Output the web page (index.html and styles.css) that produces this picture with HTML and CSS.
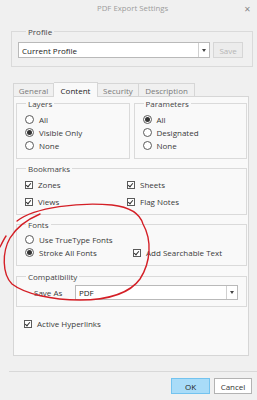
FILE: index.html
```html
<!DOCTYPE html>
<html lang="en">

<head>
    <meta charset="UTF-8">
    <meta name="viewport" content="width=device-width, initial-scale=1.0">
    <title>PDF Export Settings</title>
    <link rel="stylesheet" href="styles.css">
</head>

<body>
    <div class="titlebar">
        <span class="title">PDF Export Settings</span>
        <span class="close">&#x2715;</span>
    </div>

    <fieldset class="group profile">
        <legend>Profile</legend>
        <div class="profile-row">
            <div class="select profile-select">
                <span class="select-text">Current Profile</span>
                <span class="arrow"></span>
            </div>
            <div class="btn btn-disabled">Save</div>
        </div>
    </fieldset>

    <div class="tabs">
        <div class="tab tab-first">General</div>
        <div class="tab tab-active">Content</div>
        <div class="tab">Security</div>
        <div class="tab tab-desc">Description</div>
    </div>

    <div class="panel">
        <div class="cols">
            <fieldset class="group col">
                <legend>Layers</legend>
                <div class="rows">
                    <div class="opt"><span class="radio"></span>All</div>
                    <div class="opt"><span class="radio checked"></span>Visible Only</div>
                    <div class="opt"><span class="radio"></span>None</div>
                </div>
            </fieldset>
            <fieldset class="group col">
                <legend class="legend-params">Parameters</legend>
                <div class="rows rows-params">
                    <div class="opt"><span class="radio checked"></span>All</div>
                    <div class="opt"><span class="radio"></span>Designated</div>
                    <div class="opt"><span class="radio"></span>None</div>
                </div>
            </fieldset>
        </div>

        <fieldset class="group bookmarks">
            <legend>Bookmarks</legend>
            <div class="grid grid-bookmarks">
                <div class="opt"><span class="check"></span>Zones</div>
                <div class="opt"><span class="check"></span>Sheets</div>
                <div class="opt"><span class="check"></span>Views</div>
                <div class="opt"><span class="check"></span>Flag Notes</div>
            </div>
        </fieldset>

        <fieldset class="group fonts">
            <legend>Fonts</legend>
            <div class="grid grid-fonts">
                <div class="opt"><span class="radio"></span>Use TrueType Fonts</div>
                <div></div>
                <div class="opt"><span class="radio checked"></span>Stroke All Fonts</div>
                <div class="opt"><span class="check"></span>Add Searchable Text</div>
            </div>
        </fieldset>

        <fieldset class="group compat">
            <legend>Compatibility</legend>
            <div class="compat-row">
                <span class="compat-label">Save As</span>
                <div class="select compat-select">
                    <span class="select-text">PDF</span>
                    <span class="arrow"></span>
                </div>
            </div>
        </fieldset>

        <div class="opt hyperlinks"><span class="check"></span>Active Hyperlinks</div>
    </div>

    <div class="footer">
        <div class="btn btn-ok">OK</div>
        <div class="btn btn-cancel">Cancel</div>
    </div>

    <!-- red pen mark drawn over the dialog -->
    <svg class="annotation" width="257" height="400" viewBox="0 0 257 400">
        <path d="M17 221 C35 207, 80 202, 112 205 C130 207, 140 214, 143 224 C152 240, 151 262, 140 279 C130 293, 108 300, 80 300 C52 300, 25 294, 12 284 C2 274, 2 252, 10 238 C16 228, 26 220, 40 214"
            fill="none" stroke="#d41f26" stroke-width="1.4" stroke-linecap="round" />
        <path d="M0 247 C2 243, 4 239, 6 236" fill="none" stroke="#d41f26" stroke-width="1.4" stroke-linecap="round" />
    </svg>
</body>

</html>
```

FILE: styles.css
```css
body {
    margin: 0;
    width: 257px;
    height: 400px;
    overflow: hidden;
    position: relative;
    background: #f0f0f0;
    font-family: "Open Sans", "Noto Sans", sans-serif;
    font-size: 8px;
    color: #3a3a3a;
}

.titlebar {
    height: 16px;
    display: flex;
    align-items: center;
    padding: 0 6px 0 97px;
}

.title {
    flex: 1;
    font-size: 7.8px;
    color: #9c9c9c;
}

.close {
    font-size: 8px;
    color: #8a8a8a;
}

/* group boxes */
.group {
    margin: 0;
    padding: 0;
    min-width: 0;
    border: 1px solid #dadada;
}

.group legend {
    padding: 0 2px;
    margin-left: 9px;
    line-height: 11px;
    color: #444;
}

.profile {
    margin: 10px 4px 0 11px;
    padding: 5px 9px 8px 6px;
}

.profile legend {
    margin-left: 8px;
}

.profile-row {
    display: flex;
    gap: 3px;
}

.select {
    height: 16px;
    box-sizing: border-box;
    border: 1px solid #b9b9b9;
    background: #fff;
    display: flex;
    align-items: center;
}

.select-text {
    flex: 1;
    padding-left: 3px;
    color: #222;
}

.arrow {
    width: 10px;
    height: 100%;
    border-left: 1px solid #d0d0d0;
    display: flex;
    align-items: center;
    justify-content: center;
}

.arrow::after {
    content: "";
    border-left: 2.5px solid transparent;
    border-right: 2.5px solid transparent;
    border-top: 3px solid #444;
}

.profile-select {
    width: 194px;
}

.btn {
    height: 16px;
    box-sizing: border-box;
    display: flex;
    align-items: center;
    justify-content: center;
}

.btn-disabled {
    width: 30px;
    border: 1px solid #d6d6d6;
    background: #ececec;
    color: #b5b5b5;
}

/* tabs */
.tabs {
    margin: 15px 0 0 13px;
    height: 14px;
    display: flex;
    align-items: flex-end;
}

.tab {
    height: 13px;
    box-sizing: border-box;
    border-top: 1px solid #d6d6d6;
    border-right: 1px solid #d6d6d6;
    display: flex;
    align-items: center;
    justify-content: center;
    color: #7a7a7a;
    width: 41px;
}

.tab-first {
    border-left: 1px solid #d6d6d6;
}

.tab-active {
    width: 44px;
    height: 15px;
    margin-bottom: -1px;
    position: relative;
    background: #f9f9f9;
    color: #222;
}

.tab-desc {
    width: 56px;
}

.panel {
    margin: 0 8px 0 13px;
    height: 260px;
    box-sizing: border-box;
    border: 1px solid #d6d6d6;
    background: #f9f9f9;
    padding: 1px 1px 0 2px;
}

.cols {
    display: flex;
    gap: 4px;
}

.col {
    flex: 1;
}

.rows {
    padding: 4px 0 6px 8px;
}

.opt {
    height: 13px;
    display: flex;
    align-items: center;
    white-space: nowrap;
}

.radio {
    width: 9px;
    height: 9px;
    box-sizing: border-box;
    border: 1px solid #5a5a5a;
    border-radius: 50%;
    margin-right: 5px;
    display: flex;
    align-items: center;
    justify-content: center;
    background: #fff;
}

.radio.checked::after {
    content: "";
    width: 5px;
    height: 5px;
    border-radius: 50%;
    background: #333;
}

.check {
    width: 8px;
    height: 8px;
    box-sizing: border-box;
    border: 1px solid #5a5a5a;
    margin-right: 5px;
    background: #fff;
    position: relative;
}

.check::after {
    content: "";
    position: absolute;
    left: 1px;
    top: 0;
    width: 2px;
    height: 4px;
    border-right: 1px solid #333;
    border-bottom: 1px solid #333;
    transform: rotate(40deg);
}

.bookmarks {
    margin-top: 4px;
}

.grid {
    display: grid;
    padding: 4px 0 6px 8px;
}

.grid-bookmarks {
    grid-template-columns: 102px 1fr;
    row-gap: 4px;
}

.fonts {
    margin-top: 4px;
}

.grid-fonts {
    grid-template-columns: 108px 1fr;
    padding-top: 3px;
}

.compat {
    margin-top: 5px;
}

.compat-row {
    display: flex;
    align-items: center;
    padding: 3px 8px 6px 17px;
}

.compat-label {
    width: 41px;
}

.compat-select {
    flex: 1;
    height: 15px;
}

.hyperlinks {
    margin: 10px 0 0 8px;
}

/* bottom buttons */
.footer {
    margin-top: 15px;
    border-top: 1px solid #d8d8d8;
    margin-left: 9px;
    padding: 6px 5px 0 0;
    display: flex;
    justify-content: flex-end;
    gap: 4px;
}

.btn-ok {
    width: 39px;
    border: 1px solid #73c3ef;
    background: #a9dcf8;
    color: #222;
}

.btn-cancel {
    width: 38px;
    border: 1px solid #b3b3b3;
    background: #fff;
    color: #333;
}

.annotation {
    position: absolute;
    left: 0;
    top: 0;
    pointer-events: none;
}
```
